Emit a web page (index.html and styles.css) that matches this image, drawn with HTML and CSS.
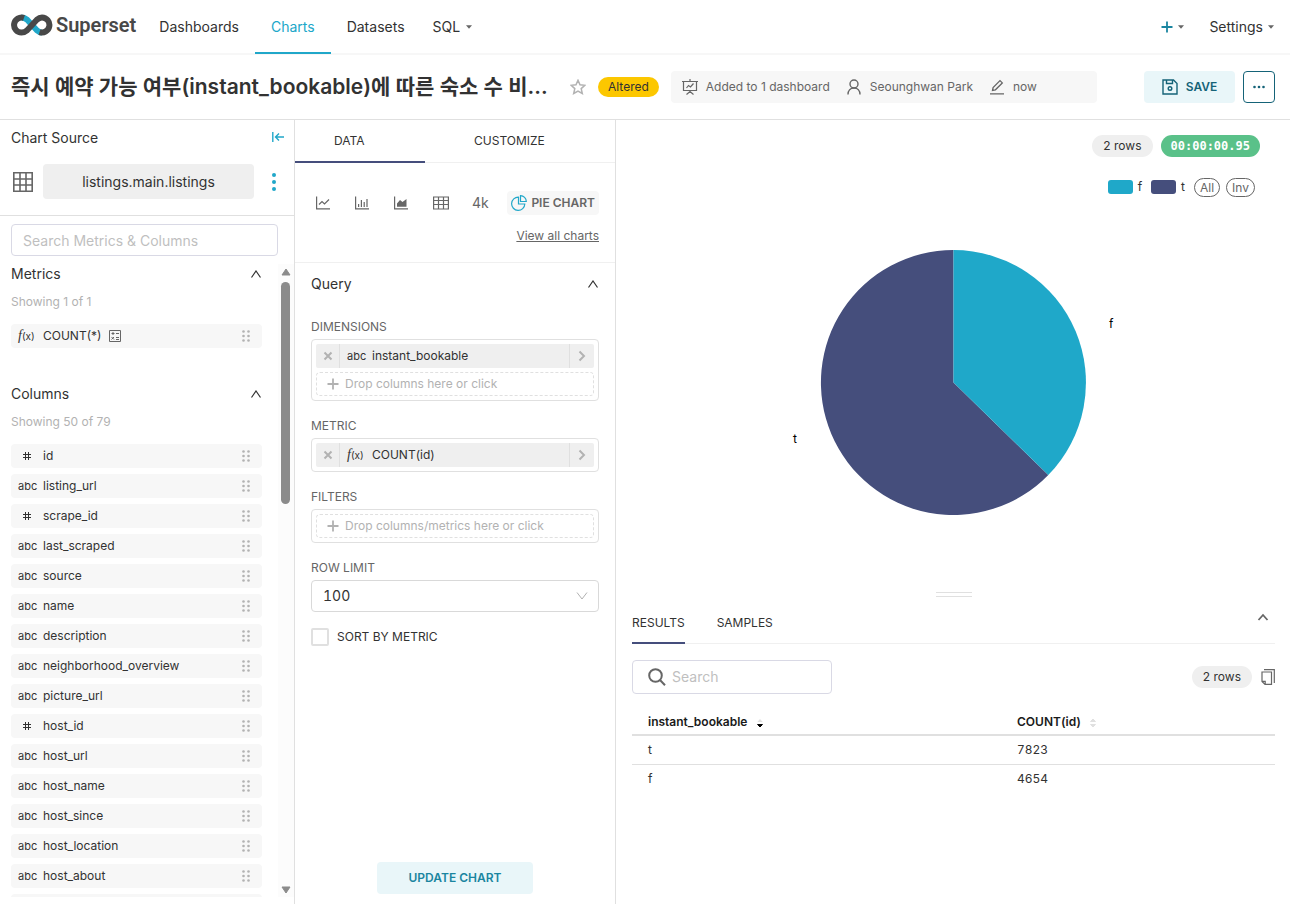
FILE: index.html
```
<!DOCTYPE html>
<html lang="ko">
<head>
	<meta charset="utf-8">
	<title>Superset - Explore</title>
	<link rel="stylesheet" href="styles.css">
</head>
<body>

	<!-- shared icons -->
	<svg class="sprite" aria-hidden="true">
		<symbol id="i-drag" viewBox="0 0 8 12"><g fill="#b2b2b2"><circle cx="1.5" cy="1.5" r="1.3"/><circle cx="6.5" cy="1.5" r="1.3"/><circle cx="1.5" cy="6" r="1.3"/><circle cx="6.5" cy="6" r="1.3"/><circle cx="1.5" cy="10.500" r="1.3"/><circle cx="6.5" cy="10.500" r="1.3"/></g></symbol>
		<symbol id="i-up" viewBox="0 0 12 8"><path d="M1.500 7.500 6 1l4.500 6.500" fill="none" stroke="currentColor" stroke-width="1.200"/></symbol>
		<symbol id="i-caret" viewBox="0 0 6 4"><path d="M0 .3h6L3 3.800z" fill="currentColor"/></symbol>
		<symbol id="i-hash" viewBox="0 0 10 10"><path d="M3.500 1v8M6.500 1v8M1 3.500h8M1 6.500h8" fill="none" stroke="#323232"/></symbol>
		<symbol id="i-x" viewBox="0 0 10 10"><path d="m1.500 1.500 7 7m0-7-7 7" stroke="#b2b2b2" stroke-width="2" fill="none"/></symbol>
		<symbol id="i-right" viewBox="0 0 8 12"><path d="m1.500 1.500 4.500 4.500-4.500 4.500" stroke="#b2b2b2" stroke-width="2" fill="none"/></symbol>
		<symbol id="i-plus" viewBox="0 0 12 12"><path d="M6 .5v11M.5 6h11" stroke="currentColor" stroke-width="1.800" fill="none"/></symbol>
	</svg>

	<header class="navbar">
		<a class="brand" href="#">
			<svg width="42" height="22" viewBox="0 0 42 22" fill="none" stroke-width="6" aria-hidden="true">
				<path d="M10.500 3.500c2.200 0 4 .8 5.700 2.300L25.800 16.200c1.700 1.500 3.500 2.300 5.200 2.300" stroke="#20a7c9"/>
				<path d="M13 3.900A7.500 7.500 0 1 0 10.500 18.500c2.200 0 4-.8 5.700-2.300L25.800 5.800C27.500 4.300 29.300 3.500 31 3.500a7.500 7.500 0 1 1-2.500 14.600" stroke="#484848"/>
			</svg>
			<span>Superset</span>
		</a>
		<nav class="menu">
			<a href="#">Dashboards</a>
			<a href="#" class="active">Charts</a>
			<a href="#">Datasets</a>
			<a href="#" class="sub">SQL <svg class="caret"><use href="#i-caret"/></svg></a>
		</nav>
		<div class="menu-right">
			<button type="button" class="new" aria-label="New"><svg width="12" height="12"><use href="#i-plus"/></svg><svg class="caret"><use href="#i-caret"/></svg></button>
			<button type="button">Settings <svg class="caret"><use href="#i-caret"/></svg></button>
		</div>
	</header>

	<div class="titlebar">
		<h1>즉시 예약 가능 여부(instant_bookable)에 따른 숙소 수 비...</h1>
		<button type="button" class="star" aria-label="Favorite">
			<svg width="16" height="16" viewBox="0 0 16 16"><path d="m8 1.300 2 4.500 4.900.5-3.700 3.300 1.100 4.900L8 12l-4.300 2.500 1.100-4.900L1.100 6.300l4.900-.5z" fill="none" stroke="#b2b2b2" stroke-width="1.500"/></svg>
		</button>
		<span class="altered">Altered</span>
		<div class="meta">
			<span><svg width="16" height="16" viewBox="0 0 16 16" fill="none" stroke="#666"><path d="M0 2.500h16M1.500 2.500v9h13v-9M8 0v2.500M8 11.500V14M4.500 15.500 8 12.500l3.500 3M4.500 9l2-2.500 2 1.500 3-3.500" stroke-width="1.200"/></svg>Added to 1 dashboard</span>
			<span><svg width="16" height="16" viewBox="0 0 16 16" fill="none" stroke="#666" stroke-width="1.400"><circle cx="8" cy="5" r="4"/><path d="M2 15.500C2 11.500 4.500 9 8 9s6 2.500 6 6.500"/></svg>Seounghwan Park</span>
			<span><svg width="16" height="16" viewBox="0 0 16 16" fill="none" stroke="#666" stroke-width="1.300"><path d="M1 14.800h14M3.500 11.500l.6-3L11 1.600l2.300 2.300-6.900 6.900z"/></svg>now</span>
		</div>
		<div class="actions">
			<button type="button" class="save">
				<svg width="16" height="16" viewBox="0 0 16 16" fill="none" stroke="#156378" stroke-width="1.400"><path d="M1 1h10.500L15 4.500V15H1zM4.500 1v3.500h6V1"/><circle cx="8" cy="9.500" r="1.800"/></svg>SAVE
			</button>
			<button type="button" class="more" aria-label="More"><svg width="12" height="4" viewBox="0 0 12 4" fill="#156378"><circle cx="1.500" cy="2" r="1.300"/><circle cx="6" cy="2" r="1.300"/><circle cx="10.500" cy="2" r="1.300"/></svg></button>
		</div>
	</div>

	<main class="explore">

		<aside class="source">
			<div class="source-head">
				<span>Chart Source</span>
				<svg width="12" height="12" viewBox="0 0 12 12" fill="none" stroke="#20a7c9" stroke-width="1.400"><path d="M.8 0v10M3.500 5H12M7 1.500 3.500 5 7 8.500"/></svg>
			</div>
			<div class="dataset">
				<svg width="20" height="20" viewBox="0 0 20 20" fill="none" stroke="#666" stroke-width="1.600"><path d="M.8.8h18.400v18.400H.8zM.8 7h18.400M.8 13h18.400M7 .8v18.400M13 .8v18.400"/></svg>
				<button type="button">listings.main.listings</button>
				<svg width="4" height="18" viewBox="0 0 4 18" fill="#20a7c9"><circle cx="2" cy="2" r="2"/><circle cx="2" cy="9" r="2"/><circle cx="2" cy="16" r="2"/></svg>
			</div>
			<input class="search-cols" type="text" placeholder="Search Metrics &amp; Columns" aria-label="Search Metrics &amp; Columns">
			<div class="scroller">
				<div class="lists">
					<section>
						<h2>Metrics <svg><use href="#i-up"/></svg></h2>
						<p>Showing 1 of 1</p>
						<ul>
							<li><i class="fx"><em>f</em>(x)</i><span>COUNT(*)</span>
								<svg class="calc" width="12" height="12" viewBox="0 0 12 12" fill="none" stroke="#666"><path d="M.5.5h11v11H.5zM2.500 3.500h3M4 2v3M7 3.500h3M2.500 7l2.500 2.500M5 7 2.500 9.500M7 7.500h3M7 9.500h3"/></svg>
								<svg class="drag"><use href="#i-drag"/></svg></li>
						</ul>
					</section>
					<section>
						<h2>Columns <svg><use href="#i-up"/></svg></h2>
						<p>Showing 50 of 79</p>
						<ul>
							<li><i><svg class="hash"><use href="#i-hash"/></svg></i><span>id</span><svg class="drag"><use href="#i-drag"/></svg></li>
							<li><i>abc</i><span>listing_url</span><svg class="drag"><use href="#i-drag"/></svg></li>
							<li><i><svg class="hash"><use href="#i-hash"/></svg></i><span>scrape_id</span><svg class="drag"><use href="#i-drag"/></svg></li>
							<li><i>abc</i><span>last_scraped</span><svg class="drag"><use href="#i-drag"/></svg></li>
							<li><i>abc</i><span>source</span><svg class="drag"><use href="#i-drag"/></svg></li>
							<li><i>abc</i><span>name</span><svg class="drag"><use href="#i-drag"/></svg></li>
							<li><i>abc</i><span>description</span><svg class="drag"><use href="#i-drag"/></svg></li>
							<li><i>abc</i><span>neighborhood_overview</span><svg class="drag"><use href="#i-drag"/></svg></li>
							<li><i>abc</i><span>picture_url</span><svg class="drag"><use href="#i-drag"/></svg></li>
							<li><i><svg class="hash"><use href="#i-hash"/></svg></i><span>host_id</span><svg class="drag"><use href="#i-drag"/></svg></li>
							<li><i>abc</i><span>host_url</span><svg class="drag"><use href="#i-drag"/></svg></li>
							<li><i>abc</i><span>host_name</span><svg class="drag"><use href="#i-drag"/></svg></li>
							<li><i>abc</i><span>host_since</span><svg class="drag"><use href="#i-drag"/></svg></li>
							<li><i>abc</i><span>host_location</span><svg class="drag"><use href="#i-drag"/></svg></li>
							<li><i>abc</i><span>host_about</span><svg class="drag"><use href="#i-drag"/></svg></li>
							<li></li>
						</ul>
					</section>
				</div>
				<div class="scrollbar" aria-hidden="true">
					<svg width="10" height="8" viewBox="0 0 10 8"><path d="M5 1 9 7H1z" fill="#8b8b8b" stroke="#8b8b8b" stroke-linejoin="round"/></svg>
					<div class="thumb"></div>
					<svg width="10" height="8" viewBox="0 0 10 8"><path d="M5 7 9 1H1z" fill="#8b8b8b" stroke="#8b8b8b" stroke-linejoin="round"/></svg>
				</div>
			</div>
		</aside>

		<section class="controls">
			<div class="tabs">
				<button type="button" class="active">DATA</button>
				<button type="button">CUSTOMIZE</button>
			</div>
			<div class="viz">
				<div class="viz-types">
					<svg width="14" height="14" viewBox="0 0 14 14" fill="none" stroke="#666" stroke-width="1.200"><path d="M.6.500v12.400H14M3 8.500 6 5.500l2.500 2.500L13 3.500"/></svg>
					<svg width="14" height="14" viewBox="0 0 14 14" fill="none" stroke="#666" stroke-width="1.200"><path d="M.6.500v12.400H14M3.600 11V8M6.400 11V4M9.200 11V6M12 11V3"/></svg>
					<svg width="14" height="14" viewBox="0 0 14 14" fill="none" stroke="#666" stroke-width="1.200"><path d="M.6.500v12.400H14"/><path d="M3 10.800V7.500l3-3.500 2.500 2L12.500 3v7.800z" fill="#666" stroke="none"/></svg>
					<svg width="16" height="14" viewBox="0 0 16 14" fill="none" stroke="#666" stroke-width="1.200"><path d="M.6 1h14.800v12H.6zM.6 4.500h14.800M.6 8.500h14.800M5.500 1v12M10.500 1v12"/></svg>
					<span>4k</span>
				</div>
				<button type="button" class="pie-type"><svg width="16" height="16" viewBox="0 0 16 16" fill="none" stroke="#20a7c9" stroke-width="1.200"><path d="M7.500 2.200A6.600 6.600 0 1 0 13.800 9H7.500z"/><path d="M9.500.7V6.500h5.800A5.800 5.800 0 0 0 9.500.7z"/></svg>PIE CHART</button>
				<a href="#" class="view-all">View all charts</a>
			</div>
			<div class="query">
				<h2>Query <svg><use href="#i-up"/></svg></h2>

				<h3>DIMENSIONS</h3>
				<div class="drop-box">
					<div class="chip">
						<button type="button" aria-label="Remove"><svg width="10" height="10"><use href="#i-x"/></svg></button>
						<div><i>abc</i>instant_bookable</div>
						<svg class="go"><use href="#i-right"/></svg>
					</div>
					<button type="button" class="drop"><svg width="12" height="12"><use href="#i-plus"/></svg>Drop columns here or click</button>
				</div>

				<h3>METRIC</h3>
				<div class="drop-box">
					<div class="chip">
						<button type="button" aria-label="Remove"><svg width="10" height="10"><use href="#i-x"/></svg></button>
						<div><i class="fx"><em>f</em>(x)</i>COUNT(id)</div>
						<svg class="go"><use href="#i-right"/></svg>
					</div>
				</div>

				<h3>FILTERS</h3>
				<div class="drop-box">
					<button type="button" class="drop"><svg width="12" height="12"><use href="#i-plus"/></svg>Drop columns/metrics here or click</button>
				</div>

				<h3><label for="row-limit">ROW LIMIT</label></h3>
				<div class="select">
					<select id="row-limit"><option>100</option></select>
					<svg width="12" height="8" viewBox="0 0 12 8"><path d="m1 .5 5 6.500 5-6.500" fill="none" stroke="#b2b2b2"/></svg>
				</div>

				<div class="check">
					<input type="checkbox" id="sort-metric">
					<label for="sort-metric">SORT BY METRIC</label>
				</div>
			</div>
			<div class="run"><button type="button">UPDATE CHART</button></div>
		</section>

		<section class="output">
			<div class="chart">
				<div class="badges">
					<span class="pill">2 rows</span>
					<span class="timer">00:00:00.95</span>
				</div>
				<div class="legend">
					<span><b class="c-f"></b>f</span>
					<span><b class="c-t"></b>t</span>
					<button type="button">All</button>
					<button type="button">Inv</button>
				</div>
				<svg class="pie" viewBox="0 0 400 280" width="400" height="280">
					<path d="M199.500 139.500 294.300 232A132.500 132.500 0 1 1 199.500 7z" fill="#454e7c"/>
					<path d="M199.500 139.500V7A132.500 132.500 0 0 1 294.300 232z" fill="#1fa8c9"/>
					<text x="355" y="85">f</text>
					<text x="39" y="200">t</text>
				</svg>
			</div>
			<div class="gutter"></div>
			<div class="results">
				<div class="result-tabs">
					<button type="button" class="active">RESULTS</button>
					<button type="button">SAMPLES</button>
					<svg width="12" height="8" viewBox="0 0 12 8"><path d="M1.500 7 6 2l4.500 5" fill="none" stroke="#666" stroke-width="1.800"/></svg>
				</div>
				<div class="result-tools">
					<label class="search">
						<svg width="18" height="18" viewBox="0 0 18 18" fill="none" stroke="#666" stroke-width="2"><circle cx="7.500" cy="7.500" r="6.300"/><path d="m12 12 5 5.200"/></svg>
						<input type="text" placeholder="Search" aria-label="Search">
					</label>
					<span class="pill">2 rows</span>
					<svg width="14" height="16" viewBox="0 0 14 16" fill="none" stroke="#666" stroke-width="1.200"><path d="M1 3h9.500v12.400H4L1 12.500zM1 12.300h3.200v3M3 .7h10.300V14"/></svg>
				</div>
				<table>
					<thead>
						<tr>
							<th class="first">instant_bookable <svg width="6" height="10" viewBox="0 0 6 10"><path d="M.3 4 3 1l2.700 3z" fill="#e0e0e0"/><path d="M.5 6.500h5L3 9z" fill="#000" stroke="#000"/></svg></th>
							<th>COUNT(id) <svg width="6" height="10" viewBox="0 0 6 10"><path d="M.5 3.500 3 1l2.500 2.500zM.5 6.500h5L3 9z" fill="#e0e0e0" stroke="#e0e0e0"/></svg></th>
						</tr>
					</thead>
					<tbody>
						<tr><td>t</td><td>7823</td></tr>
						<tr><td>f</td><td>4654</td></tr>
					</tbody>
				</table>
			</div>
		</section>

	</main>
</body>
</html>
```

FILE: styles.css
```
* { box-sizing: border-box; }
body {
	margin: 0;
	height: 100vh;
	display: flex;
	flex-direction: column;
	overflow: hidden;
	background: #fff;
	color: #323232;
	font: 14px/20px Inter, "Noto Sans CJK KR", sans-serif;
}
h1, h2, h3, p, ul { margin: 0; padding: 0; }
h2, h3 { font-weight: 400; }
ul { list-style: none; }
i { font-style: normal; }
svg { display: block; flex: none; }
a { color: inherit; text-decoration: none; }
button, input, select {
	margin: 0;
	padding: 0;
	border: 0;
	background: none;
	color: inherit;
	font: inherit;
}
input::placeholder { color: #bfbfbf; opacity: 1; }
.sprite { position: absolute; width: 0; height: 0; }
.caret { width: 6px; height: 4px; color: #666; }

/* top menu */
.navbar {
	flex: none;
	display: flex;
	height: 55px;
	padding: 0 16px 0 11px;
	border-bottom: 2px solid #f7f7f7;
}
.brand {
	display: flex;
	align-items: center;
	gap: 3px;
	height: 50px;
	margin-right: 7px;
	color: #484848;
	font: 600 20px/24px Roboto, sans-serif;
}
.menu { display: flex; }
.menu a {
	height: 54px;
	padding: 0 16px;
	border-bottom: 2px solid transparent;
	line-height: 54px;
}
.menu a.active { color: #20a7c9; border-color: #20a7c9; }
.menu a.sub { display: flex; align-items: center; gap: 6px; padding: 2px 12px 0; }
.menu-right { display: flex; align-items: center; gap: 25px; margin-left: auto; }
.menu-right button { display: flex; align-items: center; gap: 5px; }
.menu-right .new { color: #1a85a0; }

/* chart title */
.titlebar {
	flex: none;
	display: flex;
	align-items: center;
	height: 65px;
	padding: 0 15px 0 11px;
	border-bottom: 1px solid #e0e0e0;
}
h1 {
	width: 536px;
	white-space: nowrap;
	font-size: 21px;
	font-weight: 600;
	line-height: 32px;
}
.star { margin: 0 12px 0 23px; }
.altered {
	padding: 0 10px;
	border-radius: 10px;
	background: #fcc700;
	font-size: 12px;
}
.meta {
	display: flex;
	align-items: center;
	gap: 16px;
	width: 426px;
	height: 32px;
	margin-left: 12px;
	padding: 0 11px;
	border-radius: 4px;
	background: #f7f7f7;
	color: #666;
	font-size: 12px;
}
.meta span { display: flex; align-items: center; gap: 8px; }
.actions { display: flex; gap: 8px; margin-left: auto; }
.actions button {
	display: flex;
	align-items: center;
	justify-content: center;
	gap: 8px;
	height: 32px;
	border-radius: 4px;
	color: #156378;
	font-size: 12px;
	font-weight: 600;
}
.actions .save { width: 91px; background: #e9f6f9; }
.actions .more { width: 32px; border: 1px solid #156378; }

.explore { flex: 1; display: flex; min-height: 0; }

/* dataset panel */
.source {
	flex: none;
	display: flex;
	flex-direction: column;
	width: 295px;
	padding-bottom: 7px;
	border-right: 1px solid #e0e0e0;
}
.source-head {
	display: flex;
	justify-content: space-between;
	align-items: center;
	padding: 8px 10px 0 11px;
}
.dataset {
	display: flex;
	align-items: center;
	height: 68px;
	padding: 0 18px 0 13px;
	border-bottom: 1px solid #e0e0e0;
}
.dataset button {
	flex: 1;
	height: 35px;
	margin: 0 18px 0 10px;
	border-radius: 4px;
	background: #efefef;
}
.search-cols {
	width: 267px;
	height: 32px;
	margin: 8px 0 8px 11px;
	padding: 0 11px;
	border: 1px solid #d9d9e5;
	border-radius: 4px;
}
.scroller { flex: 1; display: flex; min-height: 0; }
.lists { flex: 1; overflow: hidden; padding: 0 16px 0 11px; }
.lists section { margin-bottom: 36px; }
.lists h2 {
	display: flex;
	align-items: center;
	justify-content: space-between;
	font-size: 14px;
}
.lists h2 svg { width: 12px; height: 8px; }
.lists p { margin: 8px 0 12px; color: #b2b2b2; font-size: 12px; }
.lists li {
	display: flex;
	align-items: center;
	height: 24px;
	margin-bottom: 6px;
	padding: 0 12px 0 5px;
	border-radius: 4px;
	background: #f7f7f7;
	font-size: 12px;
}
.lists i { width: 27px; padding-left: 2px; font-size: 11px; }
.lists .fx, .chip .fx { font-size: 10px; }
.fx em { font: italic 14px/12px "Liberation Serif", serif; }
.hash { width: 10px; height: 10px; margin-left: 4px; }
.calc { margin-left: 8px; }
.drag { width: 8px; height: 12px; margin-left: auto; }
.scrollbar {
	display: flex;
	flex-direction: column;
	align-items: center;
	width: 16px;
	padding: 4px 1px 3px 0;
	background: #fcfcfc;
}
.thumb { width: 9px; height: 222px; margin: 6px 0 auto; border-radius: 5px; background: #8b8b8b; }

/* control panel */
.controls {
	flex: none;
	display: flex;
	flex-direction: column;
	width: 321px;
	border-right: 1px solid #e0e0e0;
}
.tabs { display: flex; height: 43px; border-bottom: 1px solid #f0f0f0; }
.tabs button { height: 43px; padding: 0 49px; border-bottom: 2px solid transparent; font-size: 12px; }
.tabs .active { width: 130px; padding: 0 61px 0 39px; border-color: #454e7c; }
.viz {
	display: flex;
	flex-wrap: wrap;
	align-content: flex-start;
	justify-content: space-between;
	row-gap: 11px;
	height: 100px;
	padding: 28px 16px 0;
	border-bottom: 1px solid #f0f0f0;
	color: #666;
}
.viz-types { display: flex; align-items: center; gap: 25px; padding-left: 5px; }
.viz-types span { margin-left: -2px; }
.pie-type {
	display: flex;
	align-items: center;
	gap: 4px;
	height: 24px;
	padding: 0 4px;
	border-radius: 4px;
	background: #f7f7f7;
	font-size: 12px;
	font-weight: 600;
}
.view-all { margin-left: auto; font-size: 12px; text-decoration: underline; }
.query { padding: 11px 16px 0; }
.query h2 { display: flex; align-items: center; justify-content: space-between; margin-bottom: 24px; font-size: 14px; }
.query h2 svg { width: 12px; height: 8px; }
.query h3 { margin: 16px 0 3px; color: #666; font-size: 12px; line-height: 18px; }
.drop-box {
	display: grid;
	gap: 4px;
	padding: 4px;
	border: 1px solid #e0e0e0;
	border-radius: 4px;
	font-size: 12px;
}
.chip { display: flex; align-items: center; height: 24px; border-radius: 2px; background: #efefef; }
.chip button { display: grid; place-items: center; width: 24px; height: 24px; border-right: 1px solid #e0e0e0; }
.chip div { flex: 1; display: flex; align-items: center; padding-left: 7px; }
.chip i { width: 25px; font-size: 11px; }
.go { width: 25px; height: 24px; padding: 5px 8px; border-left: 1px solid #e0e0e0; }
.drop {
	display: flex;
	align-items: center;
	gap: 6px;
	height: 24px;
	padding-left: 10px;
	border: 1px dashed #e0e0e0;
	border-radius: 4px;
	color: #b2b2b2;
}
.select { display: grid; align-items: center; }
.select select, .select svg { grid-area: 1 / 1; }
.select select {
	height: 32px;
	padding: 0 11px;
	border: 1px solid #d9d9d9;
	border-radius: 4px;
	appearance: none;
	font-variant-numeric: tabular-nums;
}
.select svg { margin: 0 11px 0 auto; pointer-events: none; }
.check { display: flex; align-items: center; gap: 8px; margin-top: 15px; font-size: 12px; }
.check input { width: 18px; height: 18px; border: 2px solid #e0e0e0; border-radius: 2px; appearance: none; }
.run { margin-top: auto; padding-bottom: 10px; text-align: center; }
.run button {
	width: 156px;
	height: 32px;
	border-radius: 4px;
	background: #e9f6f9;
	color: #1a85a0;
	font-size: 12px;
	font-weight: 600;
}

/* chart and results */
.output { flex: 1; display: flex; flex-direction: column; min-width: 0; padding: 0 15px 0 16px; }
.chart { flex: 1; }
.badges { display: flex; justify-content: flex-end; gap: 8px; padding: 15px 15px 0 0; }
.pill { padding: 0 11px; border-radius: 11px; background: #efefef; font-size: 12px; line-height: 22px; }
.timer {
	padding: 0 10px;
	border-radius: 11px;
	background: #5ac189;
	color: #fff;
	font: 700 12px/22px "DejaVu Sans Mono", monospace;
}
.legend { display: flex; align-items: center; justify-content: flex-end; gap: 6px; padding: 20px 20px 0 0; font-size: 12px; }
.legend span { display: flex; align-items: center; gap: 5px; margin-right: 3px; }
.legend b { width: 25px; height: 14px; border-radius: 3px; }
.c-f { background: #1fa8c9; }
.c-t { background: #454e7c; }
.legend button { height: 19px; padding: 0 5px; border: 1px solid #666; border-radius: 10px; color: #666; line-height: 17px; }
.pie { margin: 46px auto 0; }
.pie text { fill: #000; font: 12px Roboto, sans-serif; }
.gutter { width: 36px; height: 5px; margin: 0 auto; border: solid #e0e0e0; border-width: 1px 0; }
.results { flex: none; height: 307px; padding-top: 5px; }
.result-tabs { display: flex; gap: 32px; height: 42px; border-bottom: 1px solid #f0f0f0; font-size: 12px; }
.result-tabs button { height: 42px; padding-top: 2px; border-bottom: 2px solid transparent; }
.result-tabs .active { border-color: #454e7c; }
.result-tabs svg { margin: 11px 6px 0 auto; }
.result-tools { display: flex; align-items: center; gap: 9px; height: 34px; margin: 16px 0 14px; }
.search {
	display: flex;
	align-items: center;
	gap: 6px;
	width: 200px;
	height: 34px;
	margin-right: auto;
	padding: 0 15px;
	border: 1px solid #d9d9e5;
	border-radius: 4px;
}
.search input { width: 140px; }
table { width: 100%; border-collapse: collapse; font-size: 12px; font-variant-numeric: tabular-nums; }
th { padding: 4px 16px 2px; border-bottom: 2px solid #e0e0e0; color: #1a1a1a; font-weight: 600; text-align: left; }
th.first { width: 369px; }
th svg { display: inline-block; margin-left: 6px; vertical-align: -2px; }
td { padding: 4px 16px; }
tbody tr + tr td { border-top: 1px solid #e0e0e0; }
```
